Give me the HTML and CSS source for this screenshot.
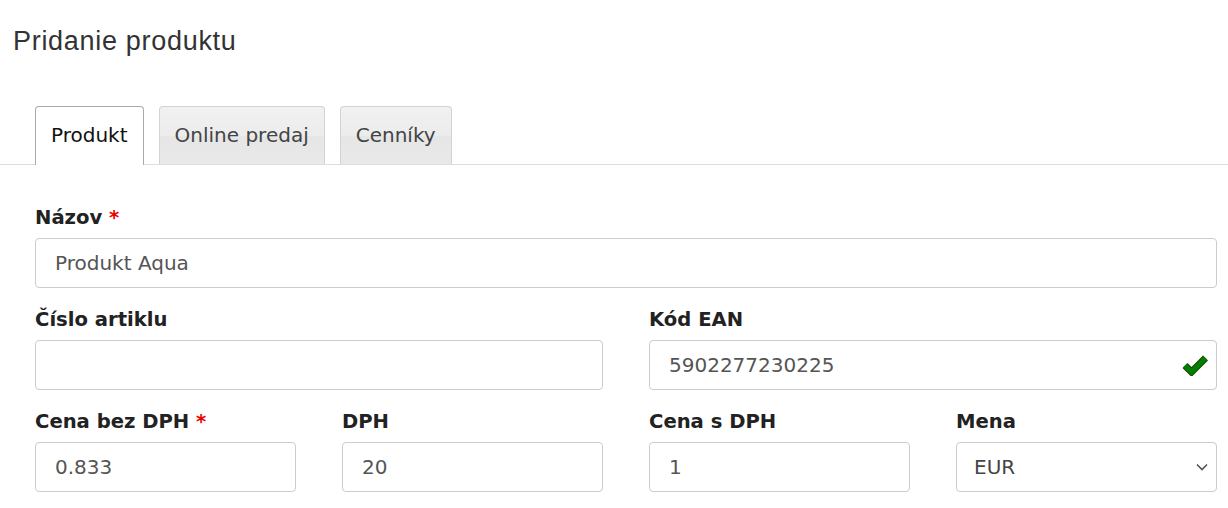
FILE: index.html
```html
<!DOCTYPE html>
<html lang="sk">
<head>
<meta charset="utf-8">
<title>Pridanie produktu</title>
<link rel="stylesheet" href="styles.css">
</head>
<body>
<h1 class="page-title">Pridanie produktu</h1>
<div class="tabs">
  <div class="tab tab-active">Produkt</div>
  <div class="tab">Online predaj</div>
  <div class="tab">Cenníky</div>
</div>
<form class="form">
  <div class="field">
    <label class="label">Názov <span class="req">*</span></label>
    <input class="input" type="text" value="Produkt Aqua">
  </div>
  <div class="row row-2">
    <div class="field">
      <label class="label">Číslo artiklu</label>
      <input class="input" type="text" value="">
    </div>
    <div class="field">
      <label class="label">Kód EAN</label>
      <div class="input-wrap">
        <input class="input" type="text" value="5902277230225">
        <svg class="check" width="27" height="22" viewBox="0 0 27 22" aria-hidden="true">
          <polyline points="3,11.5 9.5,18 23.5,4" fill="none" stroke="#1f3a00" stroke-width="7" stroke-linejoin="miter" stroke-linecap="butt"/>
          <polyline points="3,11.5 9.5,18 23.5,4" fill="none" stroke="#008000" stroke-width="5.2" stroke-linejoin="miter" stroke-linecap="butt"/>
        </svg>
      </div>
    </div>
  </div>
  <div class="row row-4">
    <div class="field">
      <label class="label">Cena bez DPH <span class="req">*</span></label>
      <input class="input" type="text" value="0.833">
    </div>
    <div class="field">
      <label class="label">DPH</label>
      <input class="input" type="text" value="20">
    </div>
    <div class="field">
      <label class="label">Cena s DPH</label>
      <input class="input" type="text" value="1">
    </div>
    <div class="field">
      <label class="label">Mena</label>
      <div class="input-wrap">
        <select class="input select">
          <option>EUR</option>
        </select>
        <svg class="chevron" width="12" height="8" viewBox="0 0 12 8" aria-hidden="true">
          <polyline points="1,1.5 6,6.5 11,1.5" fill="none" stroke="#555" stroke-width="1.6"/>
        </svg>
      </div>
    </div>
  </div>
</form>
</body>
</html>
```

FILE: styles.css
```css
html, body {
  margin: 0;
  padding: 0;
  background: #fff;
}

body {
  font-family: "DejaVu Sans", Verdana, sans-serif;
  color: #222;
}

.page-title {
  margin: 0;
  padding: 26px 0 0 13px;
  font-family: "Liberation Sans", Arial, sans-serif;
  font-weight: normal;
  font-size: 27px;
  letter-spacing: 0.7px;
  line-height: 30px;
  color: #333;
}

.tabs {
  display: flex;
  gap: 15px;
  margin-top: 50px;
  padding-left: 35px;
  border-bottom: 1px solid #ddd;
  height: 58px;
  align-items: flex-end;
}

.tab {
  box-sizing: border-box;
  height: 58px;
  padding: 0 15px;
  line-height: 56px;
  font-size: 20px;
  color: #444;
  border: 1px solid #d3d3d3;
  border-bottom: none;
  border-radius: 4px 4px 0 0;
  background: linear-gradient(to bottom, #f1f1f1 0%, #ececec 50%, #e6e6e6 52%, #e9e9e9 100%);
  white-space: nowrap;
}

.tab-active {
  background: #fff;
  color: #111;
  border-color: #aaa;
  height: 59px;
  margin-bottom: -1px;
  padding: 0 15px;
}

.form {
  padding: 41px 11px 0 35px;
  display: flex;
  flex-direction: column;
  gap: 20px;
}

.row {
  display: grid;
  column-gap: 46px;
}

.row-2 {
  grid-template-columns: 1fr 1fr;
}

.row-4 {
  grid-template-columns: 1fr 1fr 1fr 1fr;
}

.field {
  display: flex;
  flex-direction: column;
  min-width: 0;
}

.label {
  display: block;
  font-weight: bold;
  font-size: 19.6px;
  line-height: 24px;
  margin-bottom: 8px;
  color: #222;
}

.req {
  color: #ee0000;
}

.input-wrap {
  position: relative;
}

.input {
  box-sizing: border-box;
  width: 100%;
  height: 50px;
  margin: 0;
  padding: 0 19px;
  border: 1px solid #ccc;
  border-radius: 4px;
  background: #fff;
  font-family: "DejaVu Sans", Verdana, sans-serif;
  font-size: 20px;
  color: #555;
  outline: none;
}

.select {
  appearance: none;
  -webkit-appearance: none;
  padding-left: 17px;
  color: #444;
}

.check {
  position: absolute;
  right: 8px;
  top: 14px;
}

.chevron {
  position: absolute;
  right: 9px;
  top: 21px;
  pointer-events: none;
}
```
